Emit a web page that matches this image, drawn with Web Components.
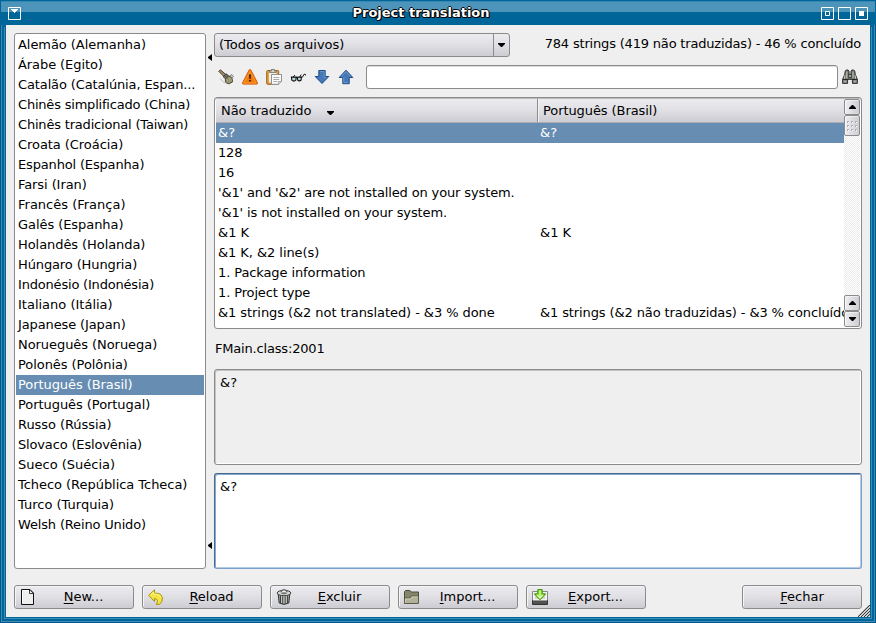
<!DOCTYPE html>
<html lang="pt-BR">
<head>
<meta charset="utf-8">
<title>Project translation</title>
<style>
    body {
        margin: 0;
        font: 13px/20px "DejaVu Sans", sans-serif;
        color: #000;
        --line: #8b8b8b;
        --face: #efefef;
        --select: #678db2;
        --button: linear-gradient(#ebebf0, #dfdfe4 50%, #ccccd2);
    }
    .main { display: grid; grid-template-columns: 192px 8px 648px; height: 536px; }
    .side { display: flex; flex-direction: column; }
    .row { display: flex; height: 24px; align-items: center; }
    .filter { justify-content: space-between; padding-bottom: 8px; }
    .filter span { position: relative; top: -1px; letter-spacing: -0.18px; margin-right: 1px; }
    .tools { gap: 8px; padding: 0 4px 8px; }
    .tools text-field { flex: 1; margin-left: 4px; margin-right: -4px; }
    .place { height: 40px; line-height: 40px; padding-left: 1px; letter-spacing: -0.18px; }
    .gap { height: 8px; }
    .actions { gap: 8px; margin-top: 16px; }
    .actions push-button:last-child { margin-left: auto; }
</style>
</head>
<body>
<app-window caption="Project translation">
    <div class="main">
        <language-list selected="17"></language-list>
        <split-handle></split-handle>
        <div class="side">
            <div class="row filter">
                <combo-box>(Todos os arquivos)</combo-box>
                <span>784 strings (419 não traduzidas) - 46 % concluído</span>
            </div>
            <div class="row tools">
                <app-icon name="brush"></app-icon>
                <app-icon name="warning"></app-icon>
                <app-icon name="paste"></app-icon>
                <app-icon name="glasses"></app-icon>
                <app-icon name="down"></app-icon>
                <app-icon name="up"></app-icon>
                <text-field></text-field>
                <app-icon name="find"></app-icon>
            </div>
            <string-table></string-table>
            <div class="place">FMain.class:2001</div>
            <text-box>&amp;?</text-box>
            <div class="gap"></div>
            <text-box focused>&amp;?</text-box>
        </div>
    </div>
    <div class="row actions">
        <push-button icon="new"><u>N</u>ew...</push-button>
        <push-button icon="undo"><u>R</u>eload</push-button>
        <push-button icon="trash"><u>E</u>xcluir</push-button>
        <push-button icon="folder"><u>I</u>mport...</push-button>
        <push-button icon="export"><u>E</u>xport...</push-button>
        <push-button><u>F</u>echar</push-button>
    </div>
</app-window>

<script>
const ICONS = {
    brush: `<path d="M.8 2.4 2.4.8l5.800 5-2 2z" fill="#a08a6c" stroke="#3d352a" stroke-width=".9"/>
        <path d="m5.200 7.800 2.900-3 2.400 2-2.600 3.300z" fill="#6b6f62" stroke="#30322d" stroke-width=".9"/>
        <path d="M7.300 10 10.400 6.800l3.500 2 .8 4-3.400 2-3.600-1z" fill="#87845f" stroke="#47462f" stroke-width=".9"/>
        <path d="m9 10 1 3.400m1-4.800 1 4.600m.5-4.400 1 3.400" stroke="#c6c3a6" stroke-width=".7"/>
        <path d="M2 9.500q3 4 7 4.700" stroke="#aaa" stroke-width=".8" fill="none"/>
        <path d="m11.800 6.600 2.200-1 1.500 2-1.500 1.400z" fill="#ccc" stroke="#555" stroke-width=".6"/>`,
    warning: `<path d="M7.100 1.100q.9-1.400 1.800 0l6.500 12.600q.5 1.400-.9 1.400h-13q-1.400 0-.9-1.400z" fill="#f57900" stroke="#d25d08"/>
        <path d="M8 2.200 14 14H2z" fill="none" stroke="#fca34c" stroke-width=".8"/>
        <path d="M7 5.500h2L8.600 10H7.400zM7.100 11h1.800v1.600H7.100z" fill="#222"/>`,
    paste: `<rect x=".7" y="1.500" width="12" height="13.800" rx="1" fill="#e0a048" stroke="#9a6210"/>
        <path d="M3 3.500h7.500v10H3z" fill="#f2efe8"/>
        <path d="M3.600 3.400V1.800h1.800V.5h3v1.300h1.800v1.600z" fill="#d7d9d3" stroke="#666" stroke-width=".8"/>
        <path d="M5.500 5.500h10v7l-2.800 2.800H5.500z" fill="#fafafa" stroke="#909090"/>
        <path d="M7.300 8.500h6M7.300 10.500h6M7.300 12.500h4" stroke="#aaa"/><path d="M15.400 12.500h-2.700v2.800" fill="#ddd" stroke="#888" stroke-width=".7"/>`,
    glasses: `<path d="M1 8.200h6.200m1 0h4.200l1.800-3 1.200.2.400 1.200M3.200 8 5 6M9.800 8l1.300-2.400" fill="none" stroke="#111"/>
        <path d="M1.400 8.200h4.800l-.4 3q-2 1.800-3.900 0zM7.200 8.200h4.200l-.3 2.800q-1.700 1.800-3.400 0z" fill="#bdd9e0" stroke="#111" stroke-width="1.100"/>`,
    down: `<path d="M4.800 1.500h6.400v6h3.600L8 14.500 1.200 7.500h3.600z" fill="#4478b7" stroke="#204a87"/>
        <path d="M5.800 2.500h4.400v6h2.200" fill="none" stroke="#729fcf" stroke-width=".8"/>`,
    up: `<path d="M8 1.200 14.800 8.500h-3.600v6.200H4.800V8.500H1.200z" fill="#4478b7" stroke="#204a87"/>
        <path d="m3.400 7.600 4.600-5 4.600 5M5.800 8v5.700h4.400" fill="none" stroke="#729fcf" stroke-width=".8"/>`,
    find: `<path d="M3.200 2.200 4.300 1h1.800L7 2.300v3h2v-3L9.900 1h1.800l1.100 1.200.4 3 2.200 5.200v4h-5v-4H5.600v4h-5v-4l2.200-5.200z" fill="#6c7069" stroke="#2e3436"/>
        <path d="M3 6.300 2.200 10M4.800 2.600v7M13 6.300l.8 3.700M11 2.600v6.600" stroke="#c2c5b8" stroke-width="1.100"/>
        <path d="M6.500 5.500h3v3h-3z" fill="#a1a698" stroke="#333" stroke-width=".8"/>
        <path d="M1.500 12.500h3M11.500 12.500h3" stroke="#a8ac9f" stroke-width="2"/><path d="M.8 10.500h5m4.400 0h5" stroke="#222"/>`,
    new: `<path d="M1.500.5H10l3.500 3.500v11.500h-12z" fill="#eee" stroke="#111"/>
        <path d="M9.500.8v3.700h4z" fill="#fff" stroke="#111" stroke-width=".8"/>
        <path d="M2.500 14.500v-13h6" fill="none" stroke="#fff"/>`,
    undo: `<path d="M6.500.8v3.400q6.800-.5 7.800 4.400.7 4-2.700 6.700l-3.300.1q3-5-1.800-6v3.100L.7 6.400z" fill="#f4e342" stroke="#a89600" stroke-linejoin="round"/>
        <path d="M2.300 6.400 5.700 3v2.200q6-.2 7.200 3.400" fill="none" stroke="#fff89a" stroke-width=".9"/>`,
    trash: `<path d="m2.200 5 1 9q4.800 2.800 9.600 0l1-9z" fill="#9b9e98" stroke="#2e3436"/>
        <path d="M4.500 7v7M6.700 7.500v7M9.100 7.500v7M11.400 7v7" stroke="#3b3e3b"/>
        <path d="M5.600 7v7M7.900 7v7M10.300 7v7" stroke="#ddd" stroke-width=".7"/>
        <ellipse cx="8" cy="4" rx="6.800" ry="2.700" fill="#d3d7cf" stroke="#3b3e3b"/>
        <path d="M5 3.200q0-2.400 3-2.400t3 2.400" fill="#eee" stroke="#3b3e3b"/><ellipse cx="8" cy="4.300" rx="3" ry="1" fill="#777"/>`,
    folder: `<path d="M.5 14.500v-12l1-1h4.500l1 1.500h7.500v5" fill="#85866c" stroke="#4b4c3c"/>
        <path d="M.5 14.500V9h5.500l1.500-2h7v7.500z" fill="#b0b196" stroke="#595a47"/>
        <path d="M1.500 13.500v-3.500h5l1.500-2h5.500" fill="none" stroke="#d0d1bb"/>`,
    export: `<path d="M.5 2.500h15v9H.5z" fill="#f3f3f3" stroke="#888"/><path d="M3 4h10v6H3z" fill="#d1d3ce"/>
        <path d="M.5 11.500h15v4H.5z" fill="#50534f" stroke="#333"/><path d="M1 11.500h14" stroke="#999"/>
        <path d="M5.800.6h4.400v4.300h3.500L8 10.800 2.300 4.900h3.500z" fill="#8ae234" stroke="#3f9105"/>
        <path d="M8 1.500v7.500M5 5.800l3 3.200 3-3.200" fill="none" stroke="#e2ffb9" stroke-width="1.100"/>`
};

class AppIcon extends HTMLElement {
    constructor() {
        super();
        this.attachShadow({ mode: 'open' });
    }

    connectedCallback() {
        this.shadowRoot.innerHTML = `
        <style>
            :host { display: block; width: 16px; height: 16px; flex: none; }
            svg { display: block; }
        </style>
        <svg width="16" height="16" viewBox="0 0 16 16" fill="none">${ICONS[this.getAttribute('name')]}</svg>
        `;
    }
}

class AppWindow extends HTMLElement {
    constructor() {
        super();
        this.attachShadow({ mode: 'open' });
    }

    connectedCallback() {
        this.shadowRoot.innerHTML = `
        <style>
            :host {
                display: block;
                position: relative;
                box-sizing: border-box;
                width: 876px;
                height: 623px;
                background: #006699;
                box-shadow: inset 0 0 0 1px #00588a, inset 0 0 0 2px #3c8db6;
                padding: 0 6px 6px;
            }
            header {
                display: flex;
                align-items: center;
                gap: 4px;
                height: 25px;
                margin: 0 -6px;
                padding: 2px 8px 0;
                box-sizing: border-box;
                background: linear-gradient(#00669a 1px, #3488b3 1px, #3488b3 2px, #4d94bb 2px, #4d94bb 12px, #006699 12px);
                box-shadow: inset 1px 0 #006699, inset -1px 0 #006699;
            }
            h1 {
                flex: 1;
                margin: -1px -34px 0 0;
                padding-right: 34px;
                text-align: center;
                font: bold 13px/20px "DejaVu Sans", sans-serif;
                color: #fff;
                text-shadow: 1px 0 #000, -1px 0 #000, 0 1px #000, 0 -1px #000, 1px 1px #000;
            }
            svg { display: block; flex: none; }
            main {
                height: 592px;
                box-sizing: border-box;
                padding: 8px;
                background: var(--face);
                box-shadow: -1px 1px #006699, 1px 1px #006699, -2px 2px #3c8db6, 2px 2px #3c8db6;
                clip-path: inset(-2px -2px -2px -2px);
            }
            .grip { position: absolute; right: 6px; bottom: 6px; }
        </style>
        <header>
            <svg width="13" height="13"><path d="M.5.5h12v12H.5z" fill="none" stroke="#fff"/><path d="M3 2h7v1H9v1H8v1H7v1H6V5H5V4H4V3H3z" fill="#fff"/></svg>
            <h1>${this.getAttribute('caption')}</h1>
            <svg width="13" height="13"><path d="M.5.5h12v12H.5zM4.500 4.500h4v4h-4z" fill="none" stroke="#fff"/></svg>
            <svg width="13" height="13"><path d="M.5.5h12v12H.5z" fill="none" stroke="#fff"/></svg>
            <svg width="13" height="13"><path d="M.5.5h12v12H.5z" fill="none" stroke="#fff"/><path d="M4 4h5v5H4z" fill="#fff"/></svg>
        </header>
        <main><slot></slot></main>
        <svg class="grip" width="12" height="12"><path d="M0 12 12 0M3 12l9-9M6 12l6-6M9 12l3-3" stroke="#333" stroke-width="1.100"/><path d="m1.500 12 10.500-10.500M4.500 12 12 4.500M7.500 12 12 7.500" stroke="#fff" stroke-width=".8"/></svg>
        `;
    }
}

class LanguageList extends HTMLElement {
    constructor() {
        super();
        this.attachShadow({ mode: 'open' });
        // name, tracking in px
        this.languages = [
            ['Alemão (Alemanha)', -.06],
            ['Árabe (Egito)', -.08],
            ['Catalão (Catalúnia, Espan...', -.12],
            ['Chinês simplificado (China)', -.2],
            ['Chinês tradicional (Taiwan)', -.19],
            ['Croata (Croácia)', -.06],
            ['Espanhol (Espanha)', -.16],
            ['Farsi (Iran)', -.08],
            ['Francês (França)', 0],
            ['Galês (Espanha)', -.06],
            ['Holandês (Holanda)', -.07],
            ['Húngaro (Hungria)', -.12],
            ['Indonésio (Indonésia)', -.19],
            ['Italiano (Itália)', 0],
            ['Japanese (Japan)', -.12],
            ['Norueguês (Noruega)', -.06],
            ['Polonês (Polônia)', -.06],
            ['Português (Brasil)', -.07],
            ['Português (Portugal)', -.06],
            ['Russo (Rússia)', -.06],
            ['Slovaco (Eslovênia)', -.16],
            ['Sueco (Suécia)', 0],
            ['Tcheco (República Tcheca)', -.04],
            ['Turco (Turquia)', 0],
            ['Welsh (Reino Unido)', -.16]
        ];
    }

    connectedCallback() {
        const selected = Number(this.getAttribute('selected'));
        this.shadowRoot.innerHTML = `
        <style>
            :host {
                display: block;
                box-sizing: border-box;
                padding: 1px;
                background: #fff;
                border: 1px solid var(--line);
                border-radius: 3px;
            }
            div { height: 20px; line-height: 19px; padding-left: 2px; white-space: nowrap; }
            .selected { background: var(--select); color: #fff; }
        </style>
        ${this.languages.map(([name, spacing], i) => `<div class="${i === selected ? 'selected' : ''}" style="letter-spacing: ${spacing}px">${name}</div>`).join('')}
        `;
    }
}

class SplitHandle extends HTMLElement {
    constructor() {
        super();
        this.attachShadow({ mode: 'open' });
    }

    connectedCallback() {
        const arrow = '<svg width="4" height="7"><path d="M4 0v7L0 4V3z"/></svg>';
        this.shadowRoot.innerHTML = `
        <style>
            :host {
                display: flex;
                flex-direction: column;
                justify-content: space-between;
                padding: 21px 2px 20px;
            }
            svg { display: block; }
        </style>
        ${arrow}${arrow}
        `;
    }
}

class ComboBox extends HTMLElement {
    constructor() {
        super();
        this.attachShadow({ mode: 'open' });
    }

    connectedCallback() {
        this.shadowRoot.innerHTML = `
        <style>
            :host {
                display: flex;
                box-sizing: border-box;
                width: 296px;
                height: 24px;
                border: 1px solid var(--line);
                border-radius: 3px;
                background: var(--button);
            }
            span { flex: 1; padding-left: 4px; line-height: 22px; }
            div { display: grid; place-items: center; width: 15px; border-left: 1px solid var(--line); }
        </style>
        <span><slot></slot></span>
        <div><svg width="7" height="4"><path d="M0 0h7v1L4 4H3L0 1z"/></svg></div>
        `;
    }
}

class TextField extends HTMLElement {
    constructor() {
        super();
        this.attachShadow({ mode: 'open' });
    }

    connectedCallback() {
        this.shadowRoot.innerHTML = `
        <style>
            :host {
                display: block;
                box-sizing: border-box;
                height: 24px;
                background: #fff;
                border: 1px solid var(--line);
                border-radius: 3px;
                box-shadow: inset 0 1px #ddd;
            }
        </style>
        `;
    }
}

class TextBox extends HTMLElement {
    constructor() {
        super();
        this.attachShadow({ mode: 'open' });
    }

    connectedCallback() {
        this.shadowRoot.innerHTML = `
        <style>
            :host {
                display: block;
                box-sizing: border-box;
                height: 96px;
                padding: 3px 5px;
                background: var(--face);
                border: 1px solid var(--line);
                border-radius: 3px;
                box-shadow: inset 1px 1px #c4c4c4, inset -1px -1px #fff;
            }
            :host([focused]) {
                background: #fff;
                border-color: #46698f #7ba0c9 #7ba0c9 #46698f;
                box-shadow: inset 1px 1px #86a9cd, inset -1px -1px #b2cce8;
            }
        </style>
        <slot></slot>
        `;
    }
}

class StringTable extends HTMLElement {
    constructor() {
        super();
        this.attachShadow({ mode: 'open' });
        // source, target, tracking of each in px
        this.rows = [
            ['&amp;?', '&amp;?', 0, 0],
            ['128', '', -.2, 0],
            ['16', '', -.2, 0],
            ["'&amp;1' and '&amp;2' are not installed on your system.", '', -.13, 0],
            ["'&amp;1' is not installed on your system.", '', -.13, 0],
            ['&amp;1 K', '&amp;1 K', 0, 0],
            ['&amp;1 K, &amp;2 line(s)', '', -.06, 0],
            ['1. Package information', '', -.1, 0],
            ['1. Project type', '', -.13, 0],
            ['&amp;1 strings (&amp;2 not translated) - &amp;3 % done', '&amp;1 strings (&amp;2 não traduzidas) - &amp;3 % concluído', -.07, -.11]
        ];
    }

    connectedCallback() {
        this.shadowRoot.innerHTML = `
        <style>
            :host {
                display: flex;
                box-sizing: border-box;
                height: 232px;
                padding: 1px;
                background: #fff;
                border: 1px solid var(--line);
                border-radius: 3px;
                box-shadow: inset 0 1px #bbb;
            }
            .grid { flex: 1; min-width: 0; }
            .head, .line { display: grid; grid-template-columns: 321px 307px; }
            .head { height: 24px; box-sizing: border-box; line-height: 23px; letter-spacing: -.08px; background: var(--button); border-bottom: 1px solid #aeaeb3; }
            .head span { padding-left: 5px; }
            .head span + span { border-left: 1px solid var(--line); box-shadow: inset 1px 0 #f4f4f7; }
            .head svg { margin-left: 12px; }
            .line { height: 20px; line-height: 20px; white-space: nowrap; overflow: hidden; }
            .line span { padding-left: 2px; }
            .line span + span { padding-left: 3px; }
            .line:nth-child(2) { background: var(--select); color: #fff; }
            .bar {
                display: flex;
                flex-direction: column;
                width: 16px;
                background: repeating-conic-gradient(#fff 0 25%, #ebebeb 0 50%) 0 0 / 2px 2px;
            }
            .bar div {
                display: grid;
                place-items: center;
                box-sizing: border-box;
                height: 16px;
                border: 1px solid var(--line);
                border-radius: 2px;
                background: linear-gradient(90deg, #eeeef2, #cdcdd3);
                box-shadow: inset 1px 1px #fff8;
            }
            .bar .thumb { height: 21px; margin-bottom: auto; }
        </style>
        <div class="grid">
            <div class="head"><span>Não traduzido <svg width="7" height="4"><path d="M0 0h7v1L4 4H3L0 1z"/></svg></span><span>Português (Brasil)</span></div>
            ${this.rows.map(([source, target, a, b]) => `<div class="line"><span style="letter-spacing: ${a}px">${source}</span><span style="letter-spacing: ${b}px">${target}</span></div>`).join('')}
        </div>
        <div class="bar">
            <div><svg width="7" height="4"><path d="M3 0h1l3 3v1H0V3z"/></svg></div>
            <div class="thumb"><svg width="10" height="10"><path d="M0 1h2m2 0h2m2 0h2M0 5h2m2 0h2m2 0h2M0 9h2m2 0h2m2 0h2" stroke="#b0b0b8" stroke-width="2"/><path d="M1 1.500h1m3 0h1m3 0h1M1 5.500h1m3 0h1m3 0h1M1 9.500h1m3 0h1m3 0h1" stroke="#fff"/></svg></div>
            <div><svg width="7" height="4"><path d="M3 0h1l3 3v1H0V3z"/></svg></div>
            <div><svg width="7" height="4"><path d="M0 0h7v1L4 4H3L0 1z"/></svg></div>
        </div>
        `;
    }
}

class PushButton extends HTMLElement {
    constructor() {
        super();
        this.attachShadow({ mode: 'open' });
    }

    connectedCallback() {
        const icon = this.getAttribute('icon');
        this.shadowRoot.innerHTML = `
        <style>
            :host {
                display: flex;
                align-items: center;
                box-sizing: border-box;
                width: 120px;
                height: 24px;
                padding: 0 ${icon ? '2px 0 5px' : '0'};
                border: 1px solid var(--line);
                border-radius: 3px;
                background: var(--button);
                box-shadow: inset 1px 1px #f4f4f7;
            }
            span { flex: 1; text-align: center; }
            ::slotted(u) { text-decoration: underline 1px; text-underline-offset: 2px; }
        </style>
        ${icon ? `<app-icon name="${icon}"></app-icon>` : ''}
        <span><slot></slot></span>
        `;
    }
}

customElements.define('app-icon', AppIcon);
customElements.define('app-window', AppWindow);
customElements.define('language-list', LanguageList);
customElements.define('split-handle', SplitHandle);
customElements.define('combo-box', ComboBox);
customElements.define('text-field', TextField);
customElements.define('text-box', TextBox);
customElements.define('string-table', StringTable);
customElements.define('push-button', PushButton);
</script>
</body>
</html>
